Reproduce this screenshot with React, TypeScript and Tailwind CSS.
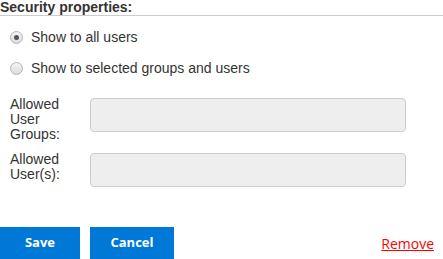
import { useState } from "react";

function Radio({ checked, label, onClick }: { checked: boolean; label: string; onClick: () => void }) {
  return (
    <button onClick={onClick} className="flex h-[20px] items-center gap-[8px] pl-[10px] text-left">
      <span className="flex h-[13px] w-[13px] items-center justify-center rounded-full border border-[#b4b4b4] bg-gradient-to-b from-[#f4f4f4] to-[#dedede]">
        {checked && <span className="h-[5px] w-[5px] rounded-full bg-[#555]" />}
      </span>
      <span className="text-[14px] leading-[16px] text-[#333]">{label}</span>
    </button>
  );
}

export default function App() {
  const [mode, setMode] = useState<"all" | "selected">("all");

  return (
    <div className="h-[259px] w-[443px] overflow-hidden bg-white font-['Liberation_Sans',Arial,sans-serif] text-[#333]">
      <div className="border-b border-[#cccccc] text-[14px] font-bold leading-[15px] text-[#333]">
        Security properties:
      </div>

      <div className="mt-[11px] flex flex-col gap-[11px]">
        <Radio checked={mode === "all"} label="Show to all users" onClick={() => setMode("all")} />
        <Radio checked={mode === "selected"} label="Show to selected groups and users" onClick={() => setMode("selected")} />
      </div>

      <div className="mt-[19px] flex flex-col gap-[10px]">
        <div className="flex items-start">
          <label className="w-[90px] pl-[10px] text-[14px] leading-[15px]">
            Allowed
            <br />
            User
            <br />
            Groups:
          </label>
          <input
            disabled
            className="mt-[1px] h-[34px] w-[316px] rounded-[4px] border border-[#cccccc] bg-[#eeeeee]"
          />
        </div>
        <div className="flex items-start">
          <label className="w-[90px] pl-[10px] text-[14px] leading-[15px]">
            Allowed
            <br />
            User(s):
          </label>
          <input
            disabled
            className="mt-[1px] h-[34px] w-[316px] rounded-[4px] border border-[#cccccc] bg-[#eeeeee]"
          />
        </div>
      </div>

      <div className="mt-[40px] flex items-center pr-[9px] font-['Open_Sans',sans-serif]">
        <button className="h-[32px] w-[80px] bg-[#0078d7] text-[13px] font-bold text-white">Save</button>
        <button className="ml-[10px] h-[32px] w-[84px] bg-[#0078d7] text-[13px] font-bold text-white">Cancel</button>
        <a href="#" className="ml-auto text-[14px] text-[#ff0000] underline">
          Remove
        </a>
      </div>
    </div>
  );
}
